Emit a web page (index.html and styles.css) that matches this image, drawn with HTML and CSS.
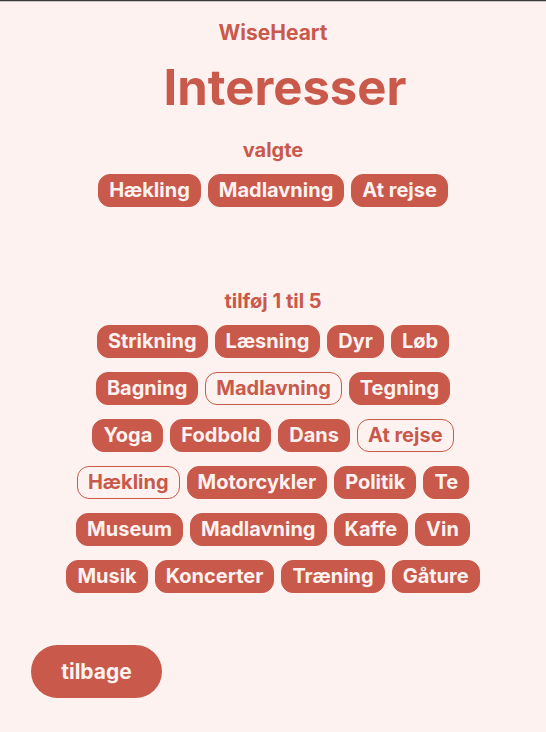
FILE: index.html
```html
<!DOCTYPE html>
<html lang="da">
<head>
<meta charset="utf-8">
<title>WiseHeart – Interesser</title>
<link rel="stylesheet" href="styles.css">
</head>
<body>
<div class="topline"></div>
<main class="screen">
  <div class="brand">WiseHeart</div>
  <h1 class="title">Interesser</h1>

  <section class="selected">
    <h2 class="label">valgte</h2>
    <div class="row">
      <span class="chip">Hækling</span>
      <span class="chip">Madlavning</span>
      <span class="chip">At rejse</span>
    </div>
  </section>

  <section class="options">
    <h2 class="label">tilføj 1 til 5</h2>
    <div class="rows">
      <div class="row">
        <span class="chip">Strikning</span>
        <span class="chip">Læsning</span>
        <span class="chip">Dyr</span>
        <span class="chip">Løb</span>
      </div>
      <div class="row">
        <span class="chip">Bagning</span>
        <span class="chip chip-outline">Madlavning</span>
        <span class="chip">Tegning</span>
      </div>
      <div class="row">
        <span class="chip">Yoga</span>
        <span class="chip">Fodbold</span>
        <span class="chip">Dans</span>
        <span class="chip chip-outline">At rejse</span>
      </div>
      <div class="row">
        <span class="chip chip-outline">Hækling</span>
        <span class="chip">Motorcykler</span>
        <span class="chip">Politik</span>
        <span class="chip">Te</span>
      </div>
      <div class="row">
        <span class="chip">Museum</span>
        <span class="chip">Madlavning</span>
        <span class="chip">Kaffe</span>
        <span class="chip">Vin</span>
      </div>
      <div class="row">
        <span class="chip">Musik</span>
        <span class="chip">Koncerter</span>
        <span class="chip">Træning</span>
        <span class="chip">Gåture</span>
      </div>
    </div>
  </section>

  <div class="footer">
    <button class="back">tilbage</button>
  </div>
</main>
</body>
</html>
```

FILE: styles.css
```css
html, body {
  margin: 0;
  padding: 0;
}
body {
  background: #fdf2f0;
  font-family: Inter, "Noto Sans", sans-serif;
  color: #c9594a;
  width: 546px;
  height: 732px;
  overflow: hidden;
}
.topline {
  height: 2px;
  background: linear-gradient(#3a3a3a 0 1px, #c8c2c1 1px 2px);
}
.screen {
  display: flex;
  flex-direction: column;
  align-items: center;
}
.brand {
  margin-top: 18px;
  font-size: 21px;
  font-weight: 700;
  line-height: 26px;
}
.title {
  margin: 13px 0 0 24px;
  font-size: 49px;
  font-weight: 700;
  line-height: 58px;
}
.label {
  margin: 0;
  font-size: 20px;
  font-weight: 700;
  line-height: 24px;
  text-align: center;
}
.selected {
  margin-top: 21px;
  display: flex;
  flex-direction: column;
  align-items: center;
  gap: 12px;
}
.options {
  margin-top: 82px;
  display: flex;
  flex-direction: column;
  align-items: center;
  gap: 12px;
}
.rows {
  display: flex;
  flex-direction: column;
  align-items: center;
  gap: 14px;
}
.row {
  display: flex;
  justify-content: center;
  gap: 7px;
}
.chip {
  box-sizing: border-box;
  height: 33px;
  padding: 0 10px;
  border-radius: 12px;
  background: #c9594a;
  border: 1.5px solid #c9594a;
  color: #fdf2f0;
  font-size: 20px;
  font-weight: 700;
  line-height: 30px;
  white-space: nowrap;
}
.chip-outline {
  background: transparent;
  color: #c9594a;
}
.footer {
  align-self: stretch;
  margin-top: 52px;
  padding-left: 31px;
}
.back {
  width: 131px;
  height: 53px;
  border: none;
  border-radius: 27px;
  background: #c9594a;
  color: #fdf2f0;
  font-family: Inter, "Noto Sans", sans-serif;
  font-size: 21px;
  font-weight: 700;
  padding: 0;
}
```
